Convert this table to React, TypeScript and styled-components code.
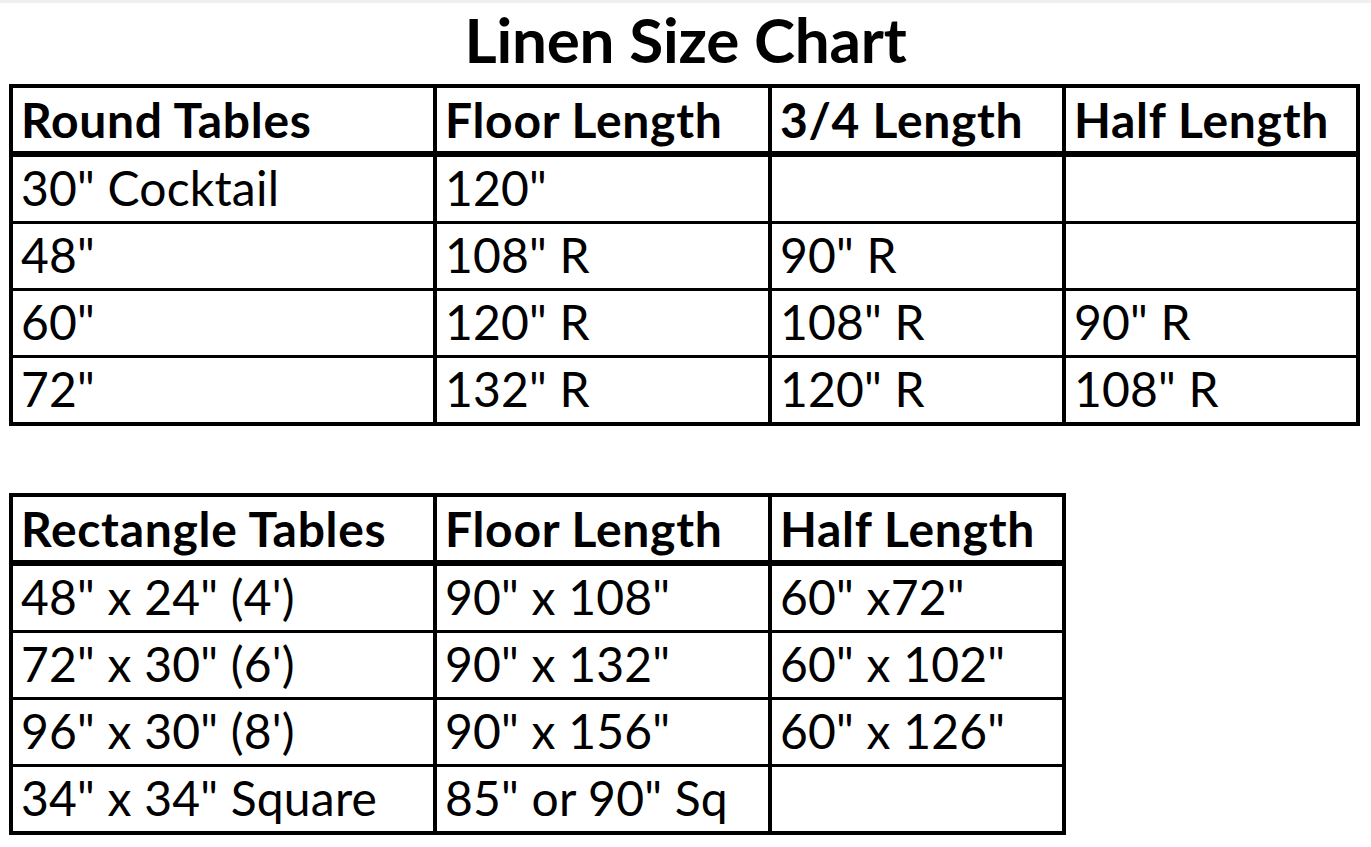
import React from 'react';
import styled, { createGlobalStyle } from 'styled-components';

const GlobalStyle = createGlobalStyle`
    html, body {
        margin: 0;
        padding: 0;
        background: #ffffff;
    }
    body {
        font-family: Lato, "Liberation Sans", sans-serif;
        color: #000000;
    }
`;

type Row = string[];

const roundTables = {
    head: ['Round Tables', 'Floor Length', '3/4 Length', 'Half Length'],
    rows: [
        ['30" Cocktail', '120"', '', ''],
        ['48"', '108" R', '90" R', ''],
        ['60"', '120" R', '108" R', '90" R'],
        ['72"', '132" R', '120" R', '108" R'],
    ] as Row[],
};

const rectTables = {
    head: ['Rectangle Tables', 'Floor Length', 'Half Length'],
    rows: [
        ['48" x 24" (4\')', '90" x 108"', '60" x72"'],
        ['72" x 30" (6\')', '90" x 132"', '60" x 102"'],
        ['96" x 30" (8\')', '90" x 156"', '60" x 126"'],
        ['34" x 34" Square', '85" or 90" Sq', ''],
    ] as Row[],
};

const colWidths = [420, 331, 290, 290];

const Page = styled.div`
    min-height: 847px;
    border-top: 3px solid #efefef;
    padding: 0 0 0 9px;
    box-sizing: border-box;
`;

const Title = styled.h1`
    margin: 0;
    height: 81px;
    display: flex;
    align-items: center;
    justify-content: center;
    padding: 0 9px 9px 0;
    box-sizing: border-box;
    font-size: 62px;
    font-weight: 700;
    line-height: 1;
    letter-spacing: -0.2px;
`;

const Sheet = styled.div<{ cols: number; gapAbove?: number }>`
    display: grid;
    grid-template-columns: ${(p) => colWidths.slice(0, p.cols).map((w) => `${w}px`).join(' ')};
    grid-template-rows: 66px;
    grid-auto-rows: 64px;
    column-gap: 4px;
    row-gap: 3px;
    width: fit-content;
    margin-top: ${(p) => p.gapAbove ?? 0}px;
    background: #000000;
    border: 4px solid #000000;
`;

const Cell = styled.div<{ head?: boolean }>`
    display: flex;
    align-items: center;
    background: #ffffff;
    padding: 0 0 ${(p) => (p.head ? 1 : 3)}px 8px;
    box-sizing: border-box;
    height: ${(p) => (p.head ? 66 : 64)}px;
    border-bottom: ${(p) => (p.head ? '3px solid #000000' : 'none')};
    font-size: 48px;
    font-weight: ${(p) => (p.head ? 700 : 400)};
    letter-spacing: ${(p) => (p.head ? '0.7px' : '0.2px')};
    white-space: nowrap;
    overflow: hidden;
`;

const HeadRow = styled.div`
    display: contents;
`;

const SizeTable = ({ head, rows, gapAbove }: { head: string[]; rows: Row[]; gapAbove?: number }) => (
    <Sheet cols={head.length} gapAbove={gapAbove}>
        <HeadRow>
            {head.map((h) => (
                <Cell head key={h}>
                    {h}
                </Cell>
            ))}
        </HeadRow>
        {rows.map((row, i) =>
            row.map((c, j) => <Cell key={`${i}-${j}`}>{c}</Cell>)
        )}
    </Sheet>
);

export default function App() {
    return (
        <>
            <GlobalStyle />
            <Page>
                <Title>Linen Size Chart</Title>
                <SizeTable head={roundTables.head} rows={roundTables.rows} />
                <SizeTable head={rectTables.head} rows={rectTables.rows} gapAbove={67} />
            </Page>
        </>
    );
}
